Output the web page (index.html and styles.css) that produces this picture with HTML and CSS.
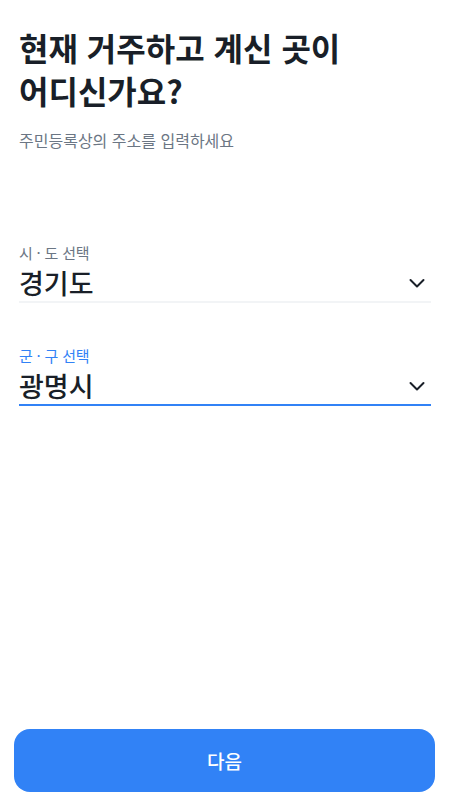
FILE: index.html
```html
<!DOCTYPE html>
<html lang="ko">
<head>
  <meta charset="utf-8">
  <title>주소 입력</title>
  <link rel="stylesheet" href="styles.css">
</head>
<body>
  <div class="page">
    <h1 class="title">현재 거주하고 계신 곳이<br>어디신가요?</h1>
    <p class="subtitle">주민등록상의 주소를 입력하세요</p>

    <div class="fields">
      <div class="field">
        <span class="field-label">시 · 도 선택</span>
        <div class="field-row">
          <span class="field-value">경기도</span>
          <svg class="chevron" width="18" height="18" viewBox="0 0 18 18"><path d="M2.5 6 L9 12.5 L15.5 6" fill="none" stroke="#191f28" stroke-width="2" stroke-linecap="round" stroke-linejoin="round"/></svg>
        </div>
      </div>

      <div class="field active">
        <span class="field-label">군 · 구 선택</span>
        <div class="field-row">
          <span class="field-value">광명시</span>
          <svg class="chevron" width="18" height="18" viewBox="0 0 18 18"><path d="M2.5 6 L9 12.5 L15.5 6" fill="none" stroke="#191f28" stroke-width="2" stroke-linecap="round" stroke-linejoin="round"/></svg>
        </div>
      </div>
    </div>

    <div class="bottom">
      <button class="next">다음</button>
    </div>
  </div>
</body>
</html>
```

FILE: styles.css
```css
* { box-sizing: border-box; }
html, body {
  margin: 0;
  height: 100%;
  background: #fff;
}
body {
  font-family: "Noto Sans CJK KR", "Noto Sans", sans-serif;
  color: #191f28;
}
.page {
  height: 100%;
  display: flex;
  flex-direction: column;
  padding: 26px 25px 8px 19px;
}
.title {
  margin: 0;
  font-size: 32px;
  line-height: 43px;
  font-weight: 700;
}
.subtitle {
  margin: 17px 0 0;
  font-size: 16px;
  line-height: 22px;
  color: #6b7684;
}
.fields {
  margin-top: 91px;
  display: flex;
  flex-direction: column;
  gap: 42px;
}
.field {
  border-bottom: 2px solid #f2f4f6;
}
.field.active { border-bottom-color: #3182f6; }
.field-label {
  display: block;
  font-size: 15px;
  line-height: 22px;
  letter-spacing: -0.2px;
  color: #6b7684;
}
.field.active .field-label { color: #3182f6; }
.field-row {
  display: flex;
  align-items: center;
  justify-content: space-between;
  padding-top: 3px;
  padding-bottom: 2px;
}
.field-value {
  font-size: 27px;
  line-height: 32px;
  font-weight: 500;
}
.chevron { margin-right: 5px; }
.bottom {
  margin-top: auto;
  margin-left: -5px;
  margin-right: -4px;
}
.next {
  width: 100%;
  height: 63px;
  border: none;
  border-radius: 16px;
  background: #3182f6;
  color: #fff;
  font-family: inherit;
  font-size: 19px;
  font-weight: 500;
}
```
